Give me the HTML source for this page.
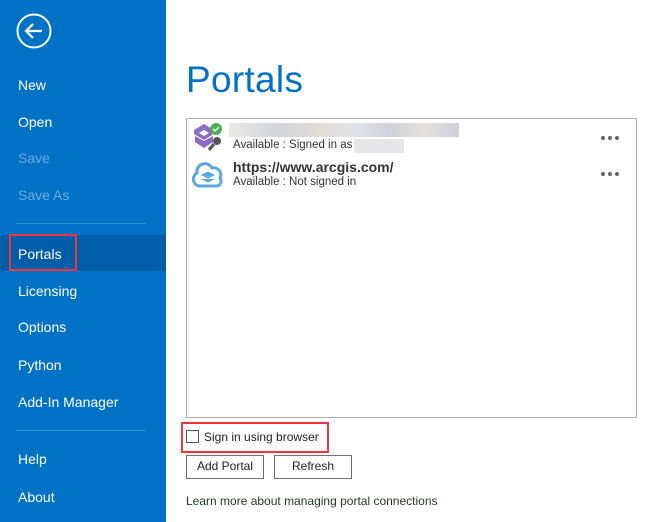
<!DOCTYPE html>
<html><head><meta charset="utf-8"><style>
*{margin:0;padding:0;box-sizing:border-box}
body{width:657px;height:522px;overflow:hidden;background:#fff;font-family:"Liberation Sans",sans-serif;position:relative}
.side{position:absolute;left:0;top:0;width:166px;height:522px;background:#0072c6}
.it{position:absolute;left:18px;color:#fff;font-size:14px;line-height:16px}
.dis{color:#6fa8dd}
.sep{position:absolute;left:16px;width:130px;height:1px;background:#3a8fd4}
.sel{position:absolute;left:0;top:235px;width:166px;height:36px;background:#005ea8}
.red{position:absolute;border:2px solid #f0363c}
.t{position:absolute;font-size:11.5px;color:#333}
.btn{position:absolute;top:455px;height:24px;border:1px solid #707070;background:#fff;font-size:12px;color:#222;text-align:center;line-height:21px}
.dots{position:absolute;left:601px;width:18px;height:4px}
.dots i{position:absolute;top:0;width:4px;height:4px;border-radius:2px;background:#666}
</style></head><body>
<div class="side">
<svg style="position:absolute;left:15px;top:12px" width="38" height="38"><circle cx="19" cy="19" r="16.5" fill="none" stroke="#fff" stroke-width="2"/><path d="M27 19H11M18 12l-7 7 7 7" fill="none" stroke="#fff" stroke-width="2.2"/></svg>
<div class="it" style="top:77px">New</div>
<div class="it" style="top:114px">Open</div>
<div class="it dis" style="top:150px">Save</div>
<div class="it dis" style="top:187px">Save As</div>
<div class="sep" style="top:223px"></div>
<div class="sel"></div>
<div class="it" style="top:246px">Portals</div>
<div class="red" style="left:9px;top:234px;width:68px;height:37px"></div>
<div class="it" style="top:283px">Licensing</div>
<div class="it" style="top:319px">Options</div>
<div class="it" style="top:357px">Python</div>
<div class="it" style="top:394px">Add-In Manager</div>
<div class="sep" style="top:430px"></div>
<div class="it" style="top:451px">Help</div>
<div class="it" style="top:489px">About</div>
</div>
<div style="position:absolute;left:186px;top:59px;font-size:37px;color:#0072c6;font-weight:300;letter-spacing:0.3px">Portals</div>
<div style="position:absolute;left:186px;top:118px;width:451px;height:300px;border:1px solid #acacac"></div>
<svg style="position:absolute;left:190px;top:122px" width="36" height="34"><path d="M4 8l10-6 8 5v6l-8 5-10-6z" fill="#8a6cc2"/><path d="M5 14l9 5 9-5v6l-9 6-9-6z" fill="#8a6cc2"/><path d="M9 11l5-3 5 3-5 3z" fill="#fff"/><circle cx="26" cy="7" r="6" fill="#4caf50"/><path d="M23 7l2 2 4-4" stroke="#fff" stroke-width="1.5" fill="none"/><circle cx="27" cy="19" r="4" fill="#555"/><path d="M24 22l-5 6" stroke="#555" stroke-width="3"/></svg>
<div style="position:absolute;left:229px;top:123px;width:230px;height:14px;background:linear-gradient(90deg,#eceae6,#d2d6da 20%,#e0dcd6 40%,#dfe3e6 55%,#d0d2dc 70%,#e4e0dc 85%,#cfd0de)"></div>
<div class="t" style="left:233px;top:139px">Available : Signed in as</div>
<div style="position:absolute;left:354px;top:139px;width:50px;height:14px;background:#e6e6e8"></div>
<svg style="position:absolute;left:190px;top:160px" width="36" height="30"><path d="M9 26a7 7 0 0 1-2-13 8 8 0 0 1 15-5 7 7 0 0 1 8 10 5 5 0 0 1-3 8z" fill="none" stroke="#5aa8e0" stroke-width="3"/><path d="M12 15l6-3 6 3-6 3z M12 19l6 3 6-3" fill="#5aa8e0" stroke="#5aa8e0"/></svg>
<div style="position:absolute;left:233px;top:159px;font-size:14px;font-weight:bold;color:#333">https://www.arcgis.com/</div>
<div class="t" style="left:233px;top:176px">Available : Not signed in</div>
<div class="dots" style="top:136px"><i style="left:0"></i><i style="left:7px"></i><i style="left:14px"></i></div>
<div class="dots" style="top:172px"><i style="left:0"></i><i style="left:7px"></i><i style="left:14px"></i></div>
<div class="red" style="left:181px;top:422px;width:148px;height:31px"></div>
<div style="position:absolute;left:186px;top:430px;width:13px;height:13px;border:1px solid #555"></div>
<div class="t" style="left:204px;top:430px;color:#222;font-size:12px">Sign in using browser</div>
<div class="btn" style="left:186px;width:78px">Add Portal</div>
<div class="btn" style="left:274px;width:78px">Refresh</div>
<div class="t" style="left:186px;top:494px;color:#1e3a1e;font-size:12px">Learn more about managing portal connections</div>
</body></html>
